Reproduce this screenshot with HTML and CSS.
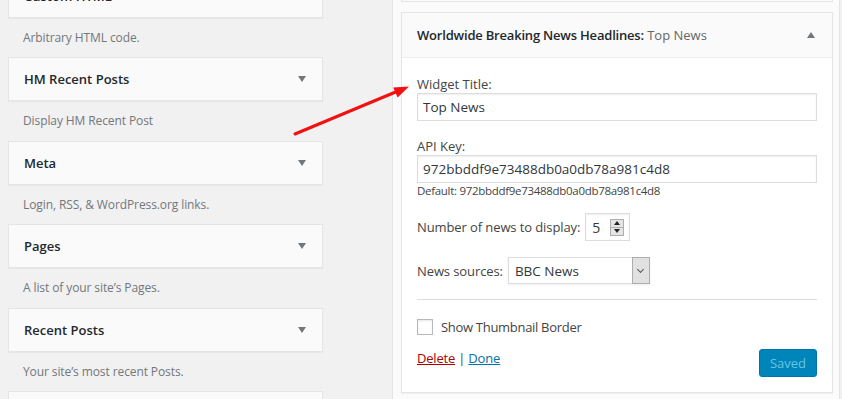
FILE: index.html
```html
<!DOCTYPE html>
<html lang="en">
<head>
    <meta charset="UTF-8">
    <meta name="viewport" content="width=device-width, initial-scale=1.0">
    <title>Widgets</title>
    <link rel="stylesheet" href="styles.css">
</head>
<body>
    <div class="page">
        <div class="available">
            <div class="widget-top"><span>Custom HTML</span><span class="toggle"></span></div>
            <div class="desc">Arbitrary HTML code.</div>
            <div class="widget-top"><span>HM Recent Posts</span><span class="toggle"></span></div>
            <div class="desc">Display HM Recent Post</div>
            <div class="widget-top"><span>Meta</span><span class="toggle"></span></div>
            <div class="desc">Login, RSS, &amp; WordPress.org links.</div>
            <div class="widget-top"><span>Pages</span><span class="toggle"></span></div>
            <div class="desc">A list of your site’s Pages.</div>
            <div class="widget-top"><span>Recent Posts</span><span class="toggle"></span></div>
            <div class="desc">Your site’s most recent Posts.</div>
            <div class="widget-top"></div>
        </div>

        <div class="sidebar">
            <div class="prev-widget"></div>

            <div class="widget">
                <div class="widget-head">
                    <h3>Worldwide Breaking News Headlines:<span class="in-title"> Top News</span></h3>
                    <span class="toggle up"></span>
                </div>
                <div class="widget-body">
                    <p class="field">
                        <label for="title">Widget Title:</label>
                        <input class="text-input" id="title" type="text" value="Top News">
                    </p>
                    <p class="field">
                        <label for="api-key">API Key:</label>
                        <input class="text-input" id="api-key" type="text" value="972bbddf9e73488db0a0db78a981c4d8">
                        <small>Default: 972bbddf9e73488db0a0db78a981c4d8</small>
                    </p>
                    <p class="row number-row">
                        <label for="count">Number of news to display:</label>
                        <span class="number-box">
                            <input id="count" type="text" value="5">
                            <span class="spinner"><span class="spin-up"></span><span class="spin-down"></span></span>
                        </span>
                    </p>
                    <p class="row select-row">
                        <label for="source">News sources:</label>
                        <span class="select-box">
                            <select id="source">
                                <option>BBC News</option>
                                <option>CNN</option>
                                <option>Reuters</option>
                            </select>
                            <span class="select-btn"></span>
                        </span>
                    </p>
                    <hr>
                    <p class="row check-row">
                        <input id="border" type="checkbox">
                        <label for="border">Show Thumbnail Border</label>
                    </p>
                    <div class="controls">
                        <span class="links"><a class="delete" href="#">Delete</a> | <a class="done" href="#">Done</a></span>
                        <button class="save" disabled>Saved</button>
                    </div>
                </div>
            </div>
        </div>
    </div>

    <svg class="pointer" width="842" height="399" viewBox="0 0 842 399">
        <line x1="295" y1="134" x2="398" y2="91" stroke="#f41010" stroke-width="3" stroke-linecap="round"/>
        <polygon points="409,86.5 397.6,97.6 393.2,87.6" fill="#f41010"/>
    </svg>
</body>
</html>
```

FILE: styles.css
```css
body {
    margin: 0;
    height: 399px;
    overflow: hidden;
    background-color: #f1f1f1;
    font-family: 'Open Sans', 'Noto Sans', sans-serif;
    font-size: 13px;
    color: #444;
}

.page {
    display: flex;
    align-items: flex-start;
    height: 399px;
    overflow: hidden;
}

/* available widgets */

.available {
    width: 315px;
    margin: -26.5px 0 0 8px;
}

.widget-top {
    box-sizing: border-box;
    height: 44px;
    display: flex;
    align-items: center;
    justify-content: space-between;
    padding: 0 16px 0 15px;
    background-color: #fafafa;
    border: 1px solid #e5e5e5;
    box-shadow: 0 1px 1px rgba(0, 0, 0, 0.04);
    font-size: 13px;
    font-weight: 600;
    color: #23282d;
}

.toggle {
    width: 0;
    height: 0;
    border-left: 4px solid transparent;
    border-right: 4px solid transparent;
    border-top: 6px solid #72777c;
}

.toggle.up {
    border-top: none;
    border-bottom: 6px solid #72777c;
}

.desc {
    height: 39.5px;
    line-height: 39.5px;
    padding-left: 15px;
    font-size: 12px;
    letter-spacing: -0.1px;
    color: #72777c;
}

/* sidebar */

.sidebar {
    box-sizing: border-box;
    width: 448px;
    height: 399px;
    margin-left: 69px;
    padding: 0 6px 0 8px;
    background-color: #fbfbfb;
    border-left: 1px solid #e5e5e5;
    border-right: 1px solid #e5e5e5;
}

.prev-widget {
    height: 32px;
    margin: -30px 0 10px;
    box-sizing: border-box;
    background-color: #fafafa;
    border: 1px solid #e5e5e5;
}

.widget {
    border: 1px solid #e5e5e5;
    background-color: #fff;
    box-shadow: 0 1px 1px rgba(0, 0, 0, 0.04);
}

.widget-head {
    height: 44px;
    display: flex;
    align-items: center;
    justify-content: space-between;
    padding: 0 17px 0 15px;
    background-color: #fafafa;
    border-bottom: 1px solid #eee;
}

.widget-head h3 {
    margin: 0;
    font-size: 13px;
    font-weight: 600;
    letter-spacing: -0.2px;
    color: #23282d;
}

.in-title {
    font-weight: 400;
    letter-spacing: 0;
    color: #666;
}

.widget-body {
    padding: 17px 15px 15px;
}

.field {
    margin: 0 0 16px;
}

.field label {
    display: block;
    line-height: 18px;
}

.text-input {
    box-sizing: border-box;
    display: block;
    width: 100%;
    height: 28px;
    margin: 0;
    padding: 0 5px;
    border: 1px solid #ddd;
    box-shadow: inset 0 1px 2px rgba(0, 0, 0, 0.07);
    font-family: inherit;
    font-size: 13.5px;
    color: #32373c;
    outline: none;
}

small {
    display: block;
    line-height: 16px;
    font-size: 11.5px;
    letter-spacing: -0.3px;
    color: #444;
}

.field:nth-child(2) {
    margin-bottom: 14px;
}

.row {
    display: flex;
    align-items: center;
    gap: 5px;
    margin: 0;
}

.row label {
    letter-spacing: -0.1px;
}

.select-row {
    margin-top: 16px;
}

.number-box {
    box-sizing: border-box;
    width: 45px;
    height: 28px;
    display: flex;
    align-items: center;
    border: 1px solid #ddd;
    box-shadow: inset 0 1px 2px rgba(0, 0, 0, 0.07);
    padding: 0 5px 0 6px;
}

.number-box input {
    width: 16px;
    border: none;
    padding: 0;
    background: transparent;
    font-family: inherit;
    font-size: 14px;
    color: #32373c;
    outline: none;
}

.spinner {
    box-sizing: border-box;
    width: 14px;
    height: 17px;
    margin-left: auto;
    display: flex;
    flex-direction: column;
    border: 1px solid #adadad;
    background-color: #e5e5e5;
}

.spinner span {
    flex: 1;
    display: flex;
    align-items: center;
    justify-content: center;
}

.spin-up {
    border-bottom: 1px solid #adadad;
}

.spin-up::after,
.spin-down::after {
    content: '';
    border-left: 3px solid transparent;
    border-right: 3px solid transparent;
}

.spin-up::after {
    border-bottom: 4px solid #222;
}

.spin-down::after {
    border-top: 4px solid #222;
}

.select-box {
    box-sizing: border-box;
    width: 142px;
    height: 27px;
    display: flex;
    border: 1px solid #ddd;
    box-shadow: 0 1px 2px rgba(0, 0, 0, 0.07);
}

.select-box select {
    flex: 1;
    min-width: 0;
    appearance: none;
    border: none;
    padding: 0 6px;
    background: #fff;
    font-family: inherit;
    font-size: 13.5px;
    color: #32373c;
    outline: none;
}

.select-btn {
    box-sizing: border-box;
    width: 18px;
    display: flex;
    align-items: center;
    justify-content: center;
    background-color: #e1e1e1;
    border: 1px solid #adadad;
    margin: -1px -1px -1px 0;
}

.select-btn::after {
    content: '';
    width: 4px;
    height: 4px;
    margin-top: -3px;
    border-right: 1px solid #555;
    border-bottom: 1px solid #555;
    transform: rotate(45deg);
}

hr {
    margin: 15px 0 18px;
    border: none;
    border-top: 1px solid #ddd;
}

.check-row {
    height: 18px;
    gap: 8px;
}

.check-row label {
    letter-spacing: -0.3px;
}

.check-row input {
    appearance: none;
    box-sizing: border-box;
    width: 16px;
    height: 16px;
    margin: 0;
    border: 1px solid #b4b9be;
    background-color: #fff;
    box-shadow: inset 0 1px 2px rgba(0, 0, 0, 0.1);
}

.controls {
    display: flex;
    justify-content: space-between;
    align-items: flex-start;
    margin-top: 13px;
}

.links {
    line-height: 18px;
    letter-spacing: -0.2px;
}

.delete {
    color: #a00;
}

.done {
    color: #0073aa;
}

.save {
    box-sizing: border-box;
    height: 28px;
    padding: 0 10px;
    border: 1px solid #0073aa;
    border-radius: 3px;
    background-color: #0085ba;
    color: #66c6e4;
    font-family: inherit;
    font-size: 13px;
}

.pointer {
    position: absolute;
    top: 0;
    left: 0;
    pointer-events: none;
}
```
